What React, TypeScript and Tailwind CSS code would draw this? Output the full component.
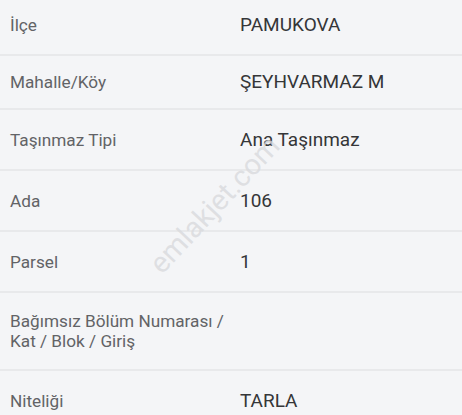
import React from "react";

const rows: { label: React.ReactNode; value: string; h: string; extra?: string }[] = [
  { label: "İlçe", value: "PAMUKOVA", h: "h-[56px]", extra: "pb-[4px]" },
  { label: "Mahalle/Köy", value: "ŞEYHVARMAZ M", h: "h-[54px]" },
  { label: "Taşınmaz Tipi", value: "Ana Taşınmaz", h: "h-[61px]" },
  { label: "Ada", value: "106", h: "h-[61px]" },
  { label: "Parsel", value: "1", h: "h-[61px]" },
  {
    label: (
      <>
        Bağımsız Bölüm Numarası /<br />
        Kat / Blok / Giriş
      </>
    ),
    value: "",
    h: "h-[78px]",
  },
  { label: "Niteliği", value: "TARLA", h: "h-[61px]" },
];

export default function App() {
  return (
    <div
      className="relative w-[462px] h-[415px] overflow-hidden bg-[#f4f5f7]"
      style={{ fontFamily: "Roboto, 'Noto Sans', sans-serif" }}
    >
      <div className="flex flex-col">
        {rows.map((r, i) => (
          <div
            key={i}
            className={`flex items-center shrink-0 border-b-2 border-[#e8e9eb] ${r.h} ${r.extra ?? ""}`}
          >
            <div className="w-[240px] pl-[10px] text-[17.2px] leading-[20px] text-[#626366] whitespace-nowrap">
              {r.label}
            </div>
            <div className="text-[19px] leading-[22px] text-[#353638] whitespace-nowrap">
              {r.value}
            </div>
          </div>
        ))}
      </div>
      <div className="pointer-events-none absolute left-[215px] top-[205px] -translate-x-1/2 -translate-y-1/2 -rotate-[47deg] text-[29px] text-[#d9dadd]/80 whitespace-nowrap">
        emlakjet.com
      </div>
    </div>
  );
}
